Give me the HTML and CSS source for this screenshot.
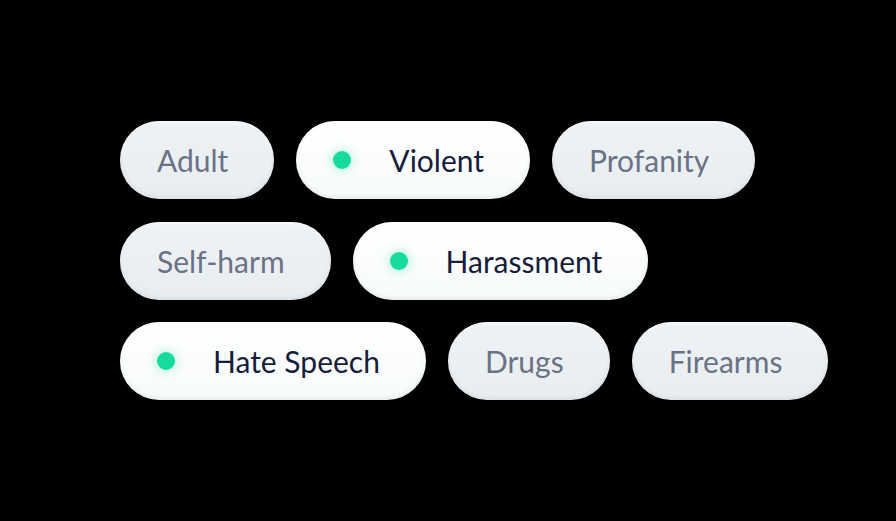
FILE: index.html
```html
<!DOCTYPE html>
<html lang="en">
<head>
<meta charset="utf-8">
<title>Categories</title>
<link rel="stylesheet" href="styles.css">
</head>
<body>
<main class="board">
  <div class="row">
    <span class="pill">Adult</span>
    <span class="pill active"><i class="dot"></i>Violent</span>
    <span class="pill">Profanity</span>
  </div>
  <div class="row">
    <span class="pill">Self-harm</span>
    <span class="pill active"><i class="dot"></i>Harassment</span>
  </div>
  <div class="row">
    <span class="pill active"><i class="dot"></i>Hate Speech</span>
    <span class="pill">Drugs</span>
    <span class="pill">Firearms</span>
  </div>
</main>
</body>
</html>
```
FILE: styles.css
```css
html, body {
  margin: 0;
  padding: 0;
  background: #000;
}
body {
  width: 896px;
  height: 521px;
  overflow: hidden;
  font-family: Lato, "Noto Sans", sans-serif;
}
.board {
  display: flex;
  flex-direction: column;
  gap: 22.5px;
  padding: 121px 0 0 120px;
}
.row {
  display: flex;
  gap: 22px;
}
.pill {
  display: flex;
  align-items: center;
  height: 78px;
  box-sizing: border-box;
  padding: 0 46px 0 37px;
  border-radius: 39px;
  background: linear-gradient(180deg, #eef2f4 0%, #e8edf0 100%);
  box-shadow: inset 0 -2px 4px rgba(120, 135, 150, 0.14), inset 0 2px 3px rgba(255, 255, 255, 0.6);
  color: #6a7287;
  font-size: 30px;
  line-height: 1;
  white-space: nowrap;
}
.pill.active {
  background: linear-gradient(180deg, #ffffff 0%, #f8fbfb 100%);
  color: #161c3b;
}
.dot {
  width: 18px;
  height: 18px;
  border-radius: 50%;
  background: #15dc9c;
  box-shadow: 0 0 8px 3px rgba(21, 220, 156, 0.22);
  margin-right: 38px;
  flex: none;
}
```
